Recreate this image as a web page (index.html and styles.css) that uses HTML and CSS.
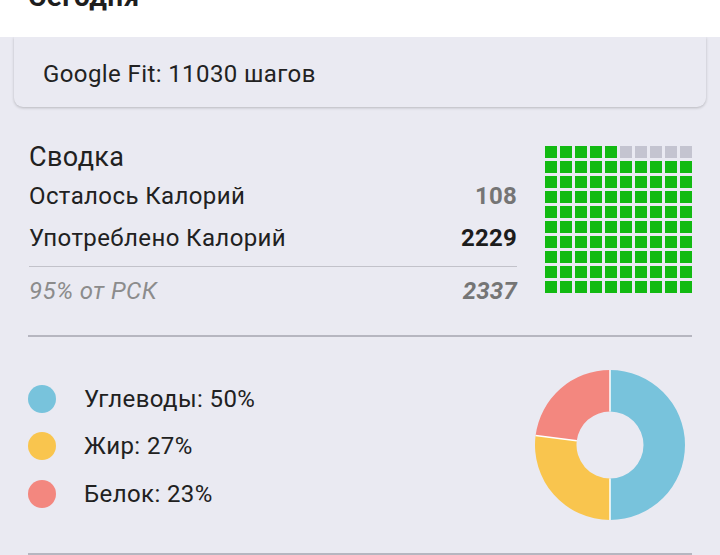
FILE: index.html
```html
<!DOCTYPE html>
<html lang="ru">
<head>
<meta charset="utf-8">
<link rel="stylesheet" href="styles.css">
</head>
<body>
<header class="topbar"><h1 class="title">Сегодня</h1></header>
<section class="fit-card">Google Fit: 11030 шагов</section>

<section class="summary">
  <div class="summary-text">
    <div class="summary-title">Сводка</div>
    <div class="row"><span>Осталось Калорий</span><span class="num num-muted">108</span></div>
    <div class="row"><span>Употреблено Калорий</span><span class="num">2229</span></div>
    <div class="rule-thin"></div>
    <div class="row row-italic"><span>95% от РСК</span><span class="num num-muted">2337</span></div>
  </div>
  <div class="waffle">
    <i class="c"></i><i class="c"></i><i class="c"></i><i class="c"></i><i class="c"></i><i class="c e"></i><i class="c e"></i><i class="c e"></i><i class="c e"></i><i class="c e"></i>
    <i class="c"></i><i class="c"></i><i class="c"></i><i class="c"></i><i class="c"></i><i class="c"></i><i class="c"></i><i class="c"></i><i class="c"></i><i class="c"></i>
    <i class="c"></i><i class="c"></i><i class="c"></i><i class="c"></i><i class="c"></i><i class="c"></i><i class="c"></i><i class="c"></i><i class="c"></i><i class="c"></i>
    <i class="c"></i><i class="c"></i><i class="c"></i><i class="c"></i><i class="c"></i><i class="c"></i><i class="c"></i><i class="c"></i><i class="c"></i><i class="c"></i>
    <i class="c"></i><i class="c"></i><i class="c"></i><i class="c"></i><i class="c"></i><i class="c"></i><i class="c"></i><i class="c"></i><i class="c"></i><i class="c"></i>
    <i class="c"></i><i class="c"></i><i class="c"></i><i class="c"></i><i class="c"></i><i class="c"></i><i class="c"></i><i class="c"></i><i class="c"></i><i class="c"></i>
    <i class="c"></i><i class="c"></i><i class="c"></i><i class="c"></i><i class="c"></i><i class="c"></i><i class="c"></i><i class="c"></i><i class="c"></i><i class="c"></i>
    <i class="c"></i><i class="c"></i><i class="c"></i><i class="c"></i><i class="c"></i><i class="c"></i><i class="c"></i><i class="c"></i><i class="c"></i><i class="c"></i>
    <i class="c"></i><i class="c"></i><i class="c"></i><i class="c"></i><i class="c"></i><i class="c"></i><i class="c"></i><i class="c"></i><i class="c"></i><i class="c"></i>
    <i class="c"></i><i class="c"></i><i class="c"></i><i class="c"></i><i class="c"></i><i class="c"></i><i class="c"></i><i class="c"></i><i class="c"></i><i class="c"></i>
  </div>
</section>

<div class="divider"></div>

<section class="macros">
  <ul class="legend">
    <li><span class="dot dot-carb"></span>Углеводы: 50%</li>
    <li><span class="dot dot-fat"></span>Жир: 27%</li>
    <li><span class="dot dot-prot"></span>Белок: 23%</li>
  </ul>
  <svg class="donut" width="150" height="150" viewBox="0 0 150 150">
    <path d="M75 0 A75 75 0 0 1 75 150 L75 108.5 A33.5 33.5 0 0 0 75 41.5 Z" fill="#78c3dc"/>
    <path d="M75 150 A75 75 0 0 1 0.59 65.6 L41.76 70.8 A33.5 33.5 0 0 0 75 108.5 Z" fill="#f9c54e"/>
    <path d="M0.59 65.6 A75 75 0 0 1 75 0 L75 41.5 A33.5 33.5 0 0 0 41.76 70.8 Z" fill="#f3877f"/>
    <g stroke="#ffffff" stroke-width="1.5">
      <line x1="75" y1="0" x2="75" y2="41.5"/>
      <line x1="75" y1="108.5" x2="75" y2="150"/>
      <line x1="0.59" y1="65.6" x2="41.76" y2="70.8"/>
    </g>
  </svg>
</section>

<div class="divider"></div>
</body>
</html>
```

FILE: styles.css
```css
html, body {
  margin: 0;
  padding: 0;
}
body {
  background: #eaeaf2;
  font-family: Roboto, "Noto Sans", sans-serif;
  color: #212121;
  width: 720px;
  height: 555px;
  overflow: hidden;
  letter-spacing: 0.4px;
}
.topbar {
  height: 37px;
  background: #ffffff;
  overflow: hidden;
  padding-left: 28px;
  position: relative;
  z-index: 2;
}
.title {
  margin: -19px 0 0 0;
  font-size: 28px;
  line-height: 32px;
  font-weight: 700;
  color: #1e1e1e;
}
.fit-card {
  margin: 0 14px;
  background: #eaeaf2;
  border-radius: 0 0 9px 9px;
  box-shadow: 0 1px 3px rgba(0, 0, 0, 0.22);
  padding: 23px 29px 19px;
  font-size: 24px;
  line-height: 28px;
  color: #222;
}
.summary {
  display: flex;
  justify-content: space-between;
  align-items: flex-start;
  margin: 31px 28px 0 29px;
}
.summary-text {
  width: 488px;
}
.summary-title {
  font-size: 27px;
  line-height: 38px;
  color: #212121;
}
.row {
  display: flex;
  justify-content: space-between;
  font-size: 24px;
  line-height: 41px;
}
.row + .row {
  margin-top: 1px;
}
.num {
  font-weight: 700;
  color: #1c1c1c;
  letter-spacing: 0.2px;
}
.num-muted {
  color: #757575;
}
.row-italic {
  font-style: italic;
  color: #8c8c8c;
  margin-top: 4px;
}
.rule-thin {
  height: 1px;
  background: #c2c2ca;
  margin-top: 7px;
}
.waffle {
  margin-top: 8px;
  display: grid;
  grid-template-columns: repeat(10, 12px);
  grid-auto-rows: 12px;
  gap: 3px;
}
.c {
  display: block;
  background: #12ba12;
}
.c.e {
  background: #c4c4d0;
}
.divider {
  height: 2px;
  background: #b6b6c0;
  margin: 23px 28px 0;
}
.macros {
  display: flex;
  justify-content: space-between;
  align-items: center;
  margin: 33px 35px 33px 28px;
}
.legend {
  list-style: none;
  margin: 0;
  padding: 0;
  padding-top: 2px;
}
.legend li {
  display: flex;
  align-items: center;
  gap: 28px;
  height: 47.5px;
  font-size: 24px;
  color: #212121;
}
.dot {
  width: 28px;
  height: 28px;
  border-radius: 50%;
  display: block;
}
.dot-carb { background: #78c3dc; }
.dot-fat { background: #f9c54e; }
.dot-prot { background: #f3877f; }
.donut {
  display: block;
}
.macros + .divider {
  margin-top: 0;
}
```
